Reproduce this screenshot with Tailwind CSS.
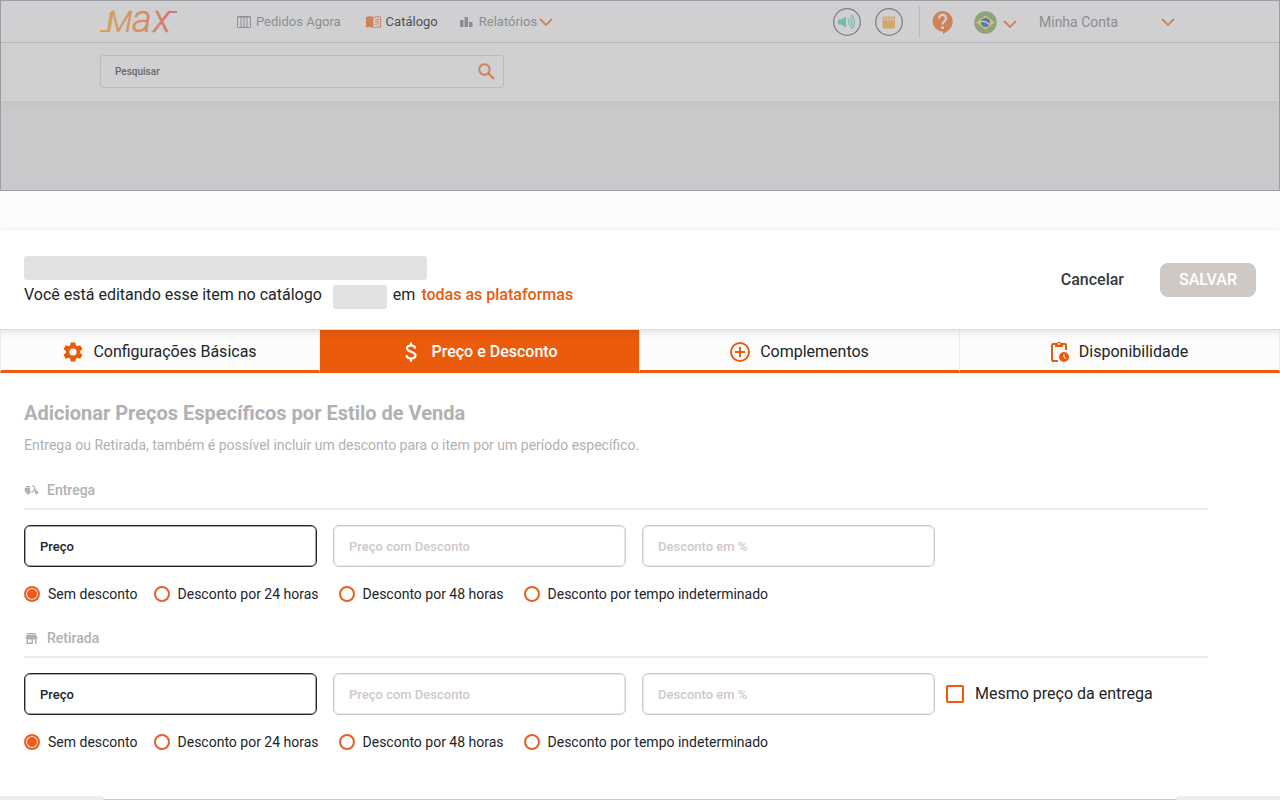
<!DOCTYPE html>
<html lang="pt-BR">
<head>
    <meta charset="UTF-8">
    <meta name="viewport" content="width=device-width, initial-scale=1.0">
    <title>Max - Catálogo</title>
    <script src="https://cdn.jsdelivr.net/npm/@tailwindcss/browser@4"></script>
</head>
<body class="min-h-screen flex flex-col bg-white text-[#212529] font-['Roboto',sans-serif]">
    <!-- Dimmed page behind the editor -->
    <div class="h-[191px] shrink-0 flex flex-col border border-[#9d9ea1] bg-[#c8c9cb]">
        <header class="h-[42px] shrink-0 flex items-center pt-px pl-[99px] pr-24 border-b border-[#bbbbbd] bg-[#d0d0d2] text-sm text-[#8b8d90]">
            <a href="#" aria-label="Max" class="mr-[59px]">
                <svg class="w-[78px] h-6 overflow-visible" viewBox="0 0 78 24" font-family="Roboto, sans-serif" font-style="italic" font-weight="300">
                    <defs>
                        <linearGradient id="brand" gradientUnits="userSpaceOnUse" x1="0" y1="0" x2="78" y2="0">
                            <stop offset="0" stop-color="#d3a557"/>
                            <stop offset="0.5" stop-color="#d58d68"/>
                            <stop offset="1" stop-color="#d67272"/>
                        </linearGradient>
                    </defs>
                    <path d="M0 21H8L11 2M69 2H77" fill="none" stroke="url(#brand)" stroke-width="2"/>
                    <text y="22" fill="url(#brand)" stroke="url(#brand)" stroke-width=".5"><tspan x="7" font-size="30">M</tspan><tspan x="32" font-size="38">a</tspan><tspan x="53" font-size="38">x</tspan></text>
                </svg>
            </a>
            <nav class="flex items-center gap-[25px] text-[13px]">
                <a href="#" class="flex items-center gap-[5px]">
                    <svg class="w-[14px] h-3" viewBox="0 0 14 12" fill="none" stroke="currentColor"><rect x=".5" y=".5" width="13" height="11" rx="1"/><path d="M0 1H14M4 1V11M7 1V11M10 1V11"/></svg>
                    Pedidos Agora
                </a>
                <a href="#" class="flex items-center gap-[5px] text-[#4f5155]">
                    <svg class="w-[15px] h-3" viewBox="0 0 15 12" fill="#d08256"><path d="M0 1Q4-.5 7.500 1V12Q4 10.500 0 11.500Z"/><path d="M7.500 1.500Q11 0 14.500 1V11Q11 10.500 7.500 12" fill="none" stroke="#d08256"/><path d="M9 4L13 3.300M9 6.200L13 5.500M9 8.400L13 7.700" stroke="#d08256"/></svg>
                    Catálogo
                </a>
                <a href="#" class="-ml-[3px] flex items-center gap-[5px]">
                    <svg class="w-[14px] h-3" viewBox="0 0 14 12" fill="currentColor"><rect x="0" y="4" width="3.500" height="7"/><rect x="4.500" y="1" width="3.500" height="10"/><rect x="9" y="6" width="3.500" height="5"/></svg>
                    Relatórios
                    <svg class="w-[14px] h-2 -ml-[3px]" viewBox="0 0 14 8" fill="none" stroke="#d08256" stroke-width="1.800"><path d="M1 1L7 7L13 1"/></svg>
                </a>
            </nav>
            <div class="ml-auto flex items-center">
                <button type="button" aria-label="Som" class="mr-[14px]">
                    <svg class="size-7" viewBox="0 0 28 28" fill="none"><circle cx="14" cy="14" r="13.300" stroke="#7b7c7f" stroke-width="1.200"/><path d="M5 11.500H8L13 8.500V19.500L8 16.500H5Z" fill="#76b8b2"/><path d="M15 11Q17.500 14 15 17M17 9Q21 14 17 19M18.500 7Q24.500 14 18.500 21" stroke="#76b8b2" stroke-width="1.200"/></svg>
                </button>
                <button type="button" aria-label="Loja" class="mr-4">
                    <svg class="size-7" viewBox="0 0 28 28"><circle cx="14" cy="14" r="13.300" fill="none" stroke="#7b7c7f" stroke-width="1.200"/><path d="M8 8.500H20V19Q20 20.500 18.500 20.500H9Q7.500 20.500 7.500 19V13Z" fill="#d3a66e"/><path d="M10 9.500V12.500M12.700 9.500V12.500M15.300 9.500V12.500M18 9.500V12.500" stroke="#d0d0d2" stroke-width="1.300"/></svg>
                </button>
                <span class="w-px h-8 mr-3 bg-[#b9babc]"></span>
                <button type="button" aria-label="Ajuda" class="mr-[21px]">
                    <svg class="w-[21px] h-6" viewBox="0 0 21 24"><path d="M10.500 1A10.200 10.200 0 1 0 11 21.400V24Q21 19 20.800 11.200A10.200 10.200 0 0 0 10.500 1Z" fill="#d08256"/><path d="M7 8.500A3.500 3.500 0 1 1 12.500 11.200Q10.500 12.500 10.500 14.500" fill="none" stroke="#d0d0d2" stroke-width="2.400"/><circle cx="10.500" cy="17.500" r="1.500" fill="#d0d0d2"/></svg>
                </button>
                <button type="button" aria-label="Idioma" class="flex items-center gap-[6px] mr-[22px]">
                    <svg class="size-[23px]" viewBox="0 0 23 23"><circle cx="11.500" cy="11.500" r="11.300" fill="#8ba47c"/><path d="M2 11.500L11.500 4.500L21 11.500L11.500 18.500Z" fill="#d3bf72"/><circle cx="11.500" cy="11.500" r="4.500" fill="#5579b0"/><path d="M7.300 10.500Q12 10 15.500 13.500" fill="none" stroke="#d0d0d2" stroke-width="1.200"/></svg>
                    <svg class="w-[14px] h-2 mt-[3px]" viewBox="0 0 14 8" fill="none" stroke="#d08256" stroke-width="1.800"><path d="M1 1L7 7L13 1"/></svg>
                </button>
                <button type="button" class="w-[136px] mr-2 flex items-center justify-between">
                    Minha Conta
                    <svg class="w-[14px] h-2" viewBox="0 0 14 8" fill="none" stroke="#d08256" stroke-width="1.800"><path d="M1 1L7 7L13 1"/></svg>
                </button>
            </div>
        </header>
        <div class="h-[58px] shrink-0 pt-3 pl-[99px] bg-[#cfcfcf] shadow-[0_2px_8px_rgba(0,0,0,0.04)]">
            <form class="w-[404px] h-[33px] flex items-center rounded-[3px] border border-[#bcbcbe] bg-[#d0d0d2]">
                <input type="text" aria-label="Pesquisar" placeholder="Pesquisar" class="grow px-[14px] text-[10px] font-medium placeholder:text-[#66686b] outline-none">
                <button type="button" aria-label="Buscar" class="mr-2">
                    <svg class="size-[17px]" viewBox="0 0 17 17" fill="none" stroke="#d08256" stroke-width="2"><circle cx="6.500" cy="6.500" r="5.200"/><path d="M10.300 10.300L16 16"/></svg>
                </button>
            </form>
        </div>
    </div>

    <div class="h-[39px] shrink-0 bg-[#fcfcfc]"></div>

    <section class="relative z-10 h-[100px] shrink-0 flex items-center justify-between px-6 bg-white border-b border-[#dcdcdc] shadow-[0_2px_8px_rgba(0,0,0,0.11)]">
        <div class="pt-[6px]">
            <div class="w-[403px] h-6 rounded-[3px] bg-[#e2e2e2]"></div>
            <p class="mt-px flex items-center text-base leading-6">
                Você está editando esse item no catálogo
                <span class="w-[54px] h-6 ml-[11px] mr-[6px] mt-1 rounded-[3px] bg-[#e2e2e2]"></span>
                em <a href="#" class="ml-[6px] font-medium text-[#ea5b0c]">todas as plataformas</a>
            </p>
        </div>
        <div class="flex items-center gap-9">
            <button type="button" class="text-base font-medium text-[#343a40]">Cancelar</button>
            <button type="button" class="w-24 h-[34px] rounded-lg bg-[#cfc9c5] text-base font-medium text-white">SALVAR</button>
        </div>
    </section>

    <nav class="h-[43px] shrink-0 grid grid-cols-4 text-base">
        <a href="#" class="flex items-center justify-center gap-[10px] pt-[3px] border-x border-[#ececec] border-b-3 border-b-[#ea5b0c] bg-[#fcfcfc]">
            <svg class="size-5" viewBox="2 2 20 20" fill="#ea5b0c"><path d="M19.140 12.940c.04-.3.060-.61.060-.94 0-.32-.02-.64-.07-.94l2.030-1.580c.18-.14.230-.41.120-.61l-1.920-3.320c-.12-.22-.37-.29-.59-.22l-2.390.96c-.5-.38-1.030-.7-1.620-.94L14.400 2.810c-.04-.24-.24-.41-.48-.41h-3.840c-.24 0-.43.170-.47.410L9.250 5.350c-.59.240-1.130.570-1.620.94L5.240 5.330c-.22-.08-.47 0-.59.220L2.740 8.870c-.12.210-.08.470.120.610l2.030 1.580c-.05.3-.09.630-.09.940s.02.640.070.940l-2.030 1.580c-.18.140-.23.410-.12.610l1.920 3.320c.12.220.370.290.590.220l2.390-.96c.5.380 1.030.7 1.620.94l.36 2.540c.05.240.240.410.480.410h3.840c.24 0 .44-.17.470-.41l.36-2.540c.59-.24 1.130-.56 1.620-.94l2.390.96c.22.080.470 0 .59-.22l1.920-3.320c.12-.22.070-.47-.12-.61l-2.010-1.580zM12 15.600A3.600 3.600 0 1 1 12 8.400a3.600 3.600 0 0 1 0 7.200z"/></svg>
            Configurações Básicas
        </a>
        <a href="#" aria-current="page" class="flex items-center justify-center gap-[10px] pt-[3px] border-r border-[#ececec] border-b-3 border-b-[#ea5b0c] bg-[#ea5b0c] font-medium text-white">
            <svg class="size-5" viewBox="2 2 20 20" fill="none" stroke="#fff" stroke-width="2.200"><path d="M16 8.500C16 4.500 8 4.500 8 8.500C8 12.500 16.500 11 16.500 15.300C16.500 19.500 7.500 19.500 7.500 15.300M12 2.500V5.500M12 18.500V21.500"/></svg>
            Preço e Desconto
        </a>
        <a href="#" class="flex items-center justify-center gap-[10px] pt-[3px] border-r border-[#ececec] border-b-3 border-b-[#ea5b0c] bg-[#fcfcfc]">
            <svg class="size-5" viewBox="0 0 20 20" fill="none" stroke="#ea5b0c" stroke-width="2"><circle cx="10" cy="10" r="9"/><path d="M10 5V15M5 10H15"/></svg>
            Complementos
        </a>
        <a href="#" class="flex items-center justify-center gap-[10px] pt-[3px] border-r border-[#ececec] border-b-3 border-b-[#ea5b0c] bg-[#fcfcfc]">
            <svg class="w-[18px] h-[21px]" viewBox="0 0 18 21" fill="#ea5b0c"><path d="M7 20H2Q1 20 1 19V4Q1 3 2 3H4M12 3H14Q15 3 15 4V9" fill="none" stroke="#ea5b0c" stroke-width="2"/><path d="M4 2H6A2.200 2.200 0 0 1 10 2H12V6H4Z"/><circle cx="8" cy="3" r="1" fill="#fcfcfc"/><circle cx="13" cy="16" r="5"/><path d="M13 13V16L15 18" fill="none" stroke="#fcfcfc"/></svg>
            Disponibilidade
        </a>
    </nav>

    <main class="grow pl-6 pr-[72px] pt-[26px]">
        <h1 class="text-xl leading-7 font-bold text-[#b1b1b1]">Adicionar Preços Específicos por Estilo de Venda</h1>
        <p class="mt-2 text-sm leading-5 text-[#b1b1b1]">Entrega ou Retirada, também é possível incluir um desconto para o item por um período específico.</p>

        <section class="mt-[25px]">
            <h2 class="flex items-center gap-2 pb-2 border-b-2 border-[#ebebeb] text-sm leading-5 font-medium text-[#b1b1b1]">
                <svg class="w-[15px] h-[10px]" viewBox="0 0 15 10" fill="#b1b1b1"><circle cx="4" cy="7.500" r="2"/><circle cx="12.500" cy="7.500" r="1.800"/><path d="M1 3Q1 2.500 2 2.500H6V7H1Q0 5 1 3ZM2 1H6V2H2Z"/><path d="M5 7H8.500L11 4L10 1H8M11 4L12.500 7" fill="none" stroke="#b1b1b1" stroke-width="1.200"/></svg>
                Entrega
            </h2>
            <div class="flex items-center gap-4 mt-[15px]">
                <input type="text" aria-label="Preço" placeholder="Preço" class="w-[293px] h-[42px] px-[15px] rounded-md border border-[#212529] shadow-[inset_0_0_0_1px_#a5a7a9] text-[13px] font-medium placeholder:text-[#212529]">
                <input type="text" aria-label="Preço com Desconto" placeholder="Preço com Desconto" class="w-[293px] h-[42px] px-[15px] rounded-md border border-[#cfc9c5] shadow-[inset_0_0_0_1px_#ebe8e6] text-[13px] font-medium placeholder:text-[#cfc9c5]">
                <input type="text" aria-label="Desconto em %" placeholder="Desconto em %" class="w-[293px] h-[42px] px-[15px] rounded-md border border-[#cfc9c5] shadow-[inset_0_0_0_1px_#ebe8e6] text-[13px] font-medium placeholder:text-[#cfc9c5]">
            </div>
            <div class="flex items-center gap-4 mt-4 text-sm leading-[22px]">
                <label class="flex items-center gap-2"><input type="radio" name="entrega" checked class="appearance-none size-4 rounded-full border-2 border-[#ea5f24] checked:bg-[#ea5b1c] checked:shadow-[inset_0_0_0_1px_white]">Sem desconto</label>
                <label class="min-w-[169px] flex items-center gap-2"><input type="radio" name="entrega" class="appearance-none size-4 rounded-full border-2 border-[#ea5f24] checked:bg-[#ea5b1c] checked:shadow-[inset_0_0_0_1px_white]">Desconto por 24 horas</label>
                <label class="min-w-[169px] flex items-center gap-2"><input type="radio" name="entrega" class="appearance-none size-4 rounded-full border-2 border-[#ea5f24] checked:bg-[#ea5b1c] checked:shadow-[inset_0_0_0_1px_white]">Desconto por 48 horas</label>
                <label class="flex items-center gap-2"><input type="radio" name="entrega" class="appearance-none size-4 rounded-full border-2 border-[#ea5f24] checked:bg-[#ea5b1c] checked:shadow-[inset_0_0_0_1px_white]">Desconto por tempo indeterminado</label>
            </div>
        </section>

        <section class="mt-[23px]">
            <h2 class="flex items-center gap-2 pb-2 border-b-2 border-[#ebebeb] text-sm leading-5 font-medium text-[#b1b1b1]">
                <svg class="w-[15px] h-[11px]" viewBox="0 0 15 11" fill="#b1b1b1"><path d="M3 0H12V1.500H3ZM2.500 2H12.500L13.500 6H12.500V11H11V6.500H9V11H2.500V6H1.500ZM4 6.500V9.500H7.500V6.500Z" fill-rule="evenodd"/></svg>
                Retirada
            </h2>
            <div class="flex items-center gap-4 mt-[15px]">
                <input type="text" aria-label="Preço" placeholder="Preço" class="w-[293px] h-[42px] px-[15px] rounded-md border border-[#212529] shadow-[inset_0_0_0_1px_#a5a7a9] text-[13px] font-medium placeholder:text-[#212529]">
                <input type="text" aria-label="Preço com Desconto" placeholder="Preço com Desconto" class="w-[293px] h-[42px] px-[15px] rounded-md border border-[#cfc9c5] shadow-[inset_0_0_0_1px_#ebe8e6] text-[13px] font-medium placeholder:text-[#cfc9c5]">
                <input type="text" aria-label="Desconto em %" placeholder="Desconto em %" class="w-[293px] h-[42px] px-[15px] rounded-md border border-[#cfc9c5] shadow-[inset_0_0_0_1px_#ebe8e6] text-[13px] font-medium placeholder:text-[#cfc9c5]">
                <label class="flex items-center gap-[11px] -ml-[5px] text-base"><input type="checkbox" class="appearance-none size-[18px] rounded-[2px] border-2 border-[#ea5b0c] checked:bg-[#ea5b0c]">Mesmo preço da entrega</label>
            </div>
            <div class="flex items-center gap-4 mt-4 text-sm leading-[22px]">
                <label class="flex items-center gap-2"><input type="radio" name="retirada" checked class="appearance-none size-4 rounded-full border-2 border-[#ea5f24] checked:bg-[#ea5b1c] checked:shadow-[inset_0_0_0_1px_white]">Sem desconto</label>
                <label class="min-w-[169px] flex items-center gap-2"><input type="radio" name="retirada" class="appearance-none size-4 rounded-full border-2 border-[#ea5f24] checked:bg-[#ea5b1c] checked:shadow-[inset_0_0_0_1px_white]">Desconto por 24 horas</label>
                <label class="min-w-[169px] flex items-center gap-2"><input type="radio" name="retirada" class="appearance-none size-4 rounded-full border-2 border-[#ea5f24] checked:bg-[#ea5b1c] checked:shadow-[inset_0_0_0_1px_white]">Desconto por 48 horas</label>
                <label class="flex items-center gap-2"><input type="radio" name="retirada" class="appearance-none size-4 rounded-full border-2 border-[#ea5f24] checked:bg-[#ea5b1c] checked:shadow-[inset_0_0_0_1px_white]">Desconto por tempo indeterminado</label>
            </div>
        </section>
    </main>

    <footer class="h-1 shrink-0 px-[102px] bg-[#eeeeee]">
        <div class="h-1 rounded-b-md border-b border-[#cccccc] bg-white"></div>
    </footer>
</body>
</html>
